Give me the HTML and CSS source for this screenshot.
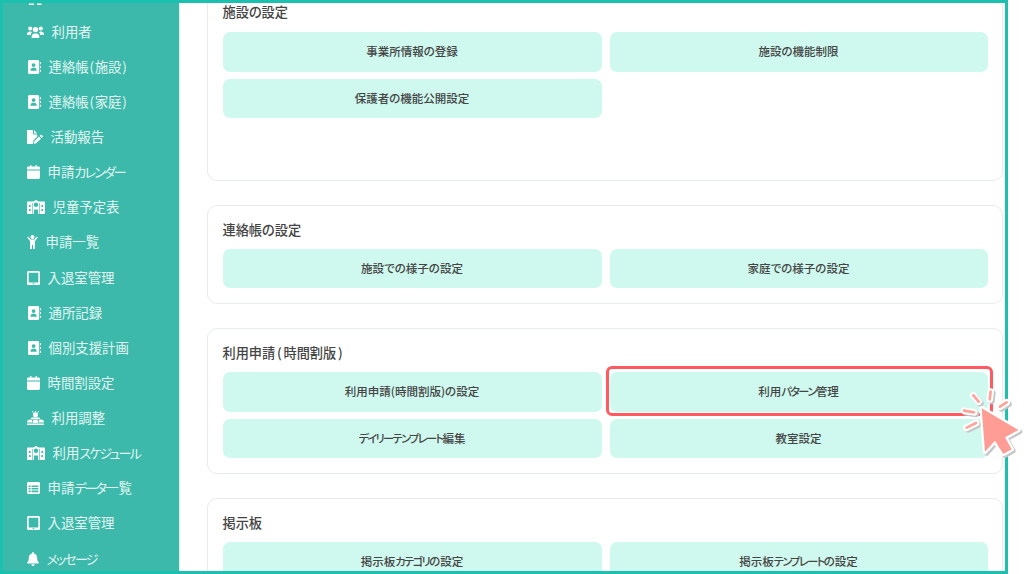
FILE: index.html
```html
<!DOCTYPE html>
<html lang="ja">
<head>
<meta charset="utf-8">
<title>設定</title>
<link rel="stylesheet" href="styles.css">
</head>
<body>
<div class="page">
  <div class="frame">
    <nav class="sidebar">
      <ul class="menu">
        <li class="item"><svg class="icon" width="17" height="16" viewBox="0 0 17 16"><rect x="2" y="14.5" width="5" height="1.5"/><rect x="10" y="14.5" width="4.5" height="1.5"/></svg></li>
        <li class="item"><svg class="icon" width="17" height="14" viewBox="0 0 17 14"><use href="#i-users"/></svg><span>利用者</span></li>
        <li class="item indent"><svg class="icon" width="13" height="14" viewBox="0 0 13 14"><use href="#i-book"/></svg><span>連絡帳<b class="paren">(</b>施設<b class="paren">)</b></span></li>
        <li class="item indent"><svg class="icon" width="13" height="14" viewBox="0 0 13 14"><use href="#i-book"/></svg><span>連絡帳<b class="paren">(</b>家庭<b class="paren">)</b></span></li>
        <li class="item"><svg class="icon" width="16" height="14" viewBox="0 0 16 14"><use href="#i-file"/></svg><span>活動報告</span></li>
        <li class="item"><svg class="icon" width="13" height="14" viewBox="0 0 13 14"><use href="#i-cal"/></svg><span>申請<i class="kana">カレンダー</i></span></li>
        <li class="item"><svg class="icon" width="18" height="14" viewBox="0 0 18 14"><use href="#i-school"/></svg><span>児童予定表</span></li>
        <li class="item"><svg class="icon" width="11" height="14" viewBox="0 0 11 14"><use href="#i-child"/></svg><span>申請一覧</span></li>
        <li class="item"><svg class="icon" width="13" height="14" viewBox="0 0 13 14"><use href="#i-tablet"/></svg><span>入退室管理</span></li>
        <li class="item indent"><svg class="icon" width="13" height="14" viewBox="0 0 13 14"><use href="#i-book"/></svg><span>通所記録</span></li>
        <li class="item indent"><svg class="icon" width="13" height="14" viewBox="0 0 13 14"><use href="#i-book"/></svg><span>個別支援計画</span></li>
        <li class="item"><svg class="icon" width="13" height="14" viewBox="0 0 13 14"><use href="#i-cal"/></svg><span>時間割設定</span></li>
        <li class="item"><svg class="icon" width="17" height="14" viewBox="0 0 17 14"><use href="#i-adjust"/></svg><span>利用調整</span></li>
        <li class="item"><svg class="icon" width="18" height="14" viewBox="0 0 18 14"><use href="#i-school"/></svg><span>利用<i class="kana">スケジュール</i></span></li>
        <li class="item"><svg class="icon" width="13" height="12" viewBox="0 0 13 12"><use href="#i-table"/></svg><span>申請<i class="kana">データ</i>一覧</span></li>
        <li class="item"><svg class="icon" width="13" height="14" viewBox="0 0 13 14"><use href="#i-tablet"/></svg><span>入退室管理</span></li>
        <li class="item"><svg class="icon" width="12" height="14" viewBox="0 0 12 14"><use href="#i-bell"/></svg><span><i class="kana">メッセージ</i></span></li>
      </ul>
    </nav>
    <main class="main">
      <div class="stack">
        <section class="card card-tall">
          <h2 class="title">施設の設定</h2>
          <div class="grid">
            <a class="btn">事業所情報の登録</a>
            <a class="btn">施設の機能制限</a>
            <a class="btn">保護者の機能公開設定</a>
          </div>
        </section>
        <section class="card">
          <h2 class="title">連絡帳の設定</h2>
          <div class="grid">
            <a class="btn">施設での様子の設定</a>
            <a class="btn">家庭での様子の設定</a>
          </div>
        </section>
        <section class="card">
          <h2 class="title">利用申請<b class="paren-wide">(</b>時間割版<b class="paren-wide">)</b></h2>
          <div class="grid">
            <a class="btn">利用申請(時間割版)の設定</a>
            <a class="btn marked">利用<i class="kana">パターン</i>管理</a>
            <a class="btn"><i class="kana">デイリーテンプレート</i>編集</a>
            <a class="btn">教室設定</a>
          </div>
        </section>
        <section class="card">
          <h2 class="title">掲示板</h2>
          <div class="grid">
            <a class="btn">掲示板<i class="kana">カテゴリ</i>の設定</a>
            <a class="btn">掲示板<i class="kana">テンプレート</i>の設定</a>
          </div>
        </section>
      </div>
    </main>
  </div>

  <svg class="pointer" width="124" height="124" viewBox="0 0 372 372">
    <g class="pointer-shadow" transform="translate(5 5)">
      <path d="M245 175 355 240 315 262 335 298 310 312 285 272 255 305Z"/>
      <path class="spark-s" d="M220 136 236 155M272 125 269 148M320 157 300 170M192 182 222 187M200 233 228 219"/>
    </g>
    <path class="arrow-edge" d="M245 175 355 240 315 262 335 298 310 312 285 272 255 305Z"/>
    <path class="spark-edge" d="M220 136 236 155M272 125 269 148M320 157 300 170M192 182 222 187M200 233 228 219"/>
    <path class="spark" d="M220 136 236 155M272 125 269 148M320 157 300 170M192 182 222 187M200 233 228 219"/>
    <path class="arrow" d="M245 175 355 240 315 262 335 298 310 312 285 272 255 305Z"/>
  </svg>
</div>

<svg class="defs" width="0" height="0">
  <defs>
    <symbol id="i-users" viewBox="0 0 17 14">
      <circle cx="3.2" cy="3.6" r="2"/><circle cx="13.8" cy="3.6" r="2"/><circle cx="8.5" cy="4.6" r="2.7"/>
      <path d="M0 9.4C0 7.4 1.4 6.4 3 6.4 4 6.4 4.7 6.8 5 7.2 4.2 8 3.8 8.8 3.7 10H.6C.2 10 0 9.8 0 9.4ZM17 9.4C17 7.4 15.6 6.4 14 6.4 13 6.4 12.3 6.8 12 7.2 12.8 8 13.2 8.8 13.3 10H16.4C16.8 10 17 9.8 17 9.4ZM4.6 12C4.6 9.8 6 8.4 7.2 8.4H9.8C11 8.4 12.4 9.8 12.4 12 12.4 12.7 12 13 11.5 13H5.5C5 13 4.6 12.7 4.6 12Z"/>
    </symbol>
    <symbol id="i-book" viewBox="0 0 13 14">
      <path fill-rule="evenodd" d="M1.5 0H9.7C10.5 0 11.2.7 11.2 1.5V12.5C11.2 13.3 10.5 14 9.7 14H1.5C.7 14 0 13.3 0 12.5V1.5C0 .7.7 0 1.5 0ZM5.6 3.2A1.9 1.9 0 1 0 5.6 7 1.9 1.9 0 0 0 5.6 3.2ZM2.5 10.8H8.7C8.7 8.9 7.6 7.8 6.6 7.8H4.6C3.6 7.8 2.5 8.9 2.5 10.8Z"/>
      <path d="M12 2.2H13V4.2H12ZM12 6H13V8H12ZM12 9.8H13V11.8H12Z"/>
    </symbol>
    <symbol id="i-file" viewBox="0 0 16 14">
      <path d="M0 1C0 .4.4 0 1 0H6V3.6C6 4.2 6.4 4.6 7 4.6H10.2V6.6L6.6 10.4 6 13.6 6.2 14H1C.4 14 0 13.6 0 13ZM7 0 10.2 3.4H7ZM11.8 6.6 14 8.8 8.8 13.4 6.9 13.8 7.3 11.6ZM12.6 5.8 13.6 5C14 4.7 14.4 4.7 14.8 5L15.6 5.8C16 6.2 16 6.7 15.6 7L14.8 8Z"/>
    </symbol>
    <symbol id="i-cal" viewBox="0 0 13 14">
      <path d="M3 0H4.4V1.6H8.6V0H10V1.6H11.6C12.4 1.6 13 2.2 13 3V4.6H0V3C0 2.2.6 1.6 1.4 1.6H3ZM0 5.4H13V12.6C13 13.4 12.4 14 11.6 14H1.4C.6 14 0 13.4 0 12.6Z"/>
    </symbol>
    <symbol id="i-school" viewBox="0 0 18 14">
      <path fill-rule="evenodd" d="M6.2 1.6 9 0 11.8 1.6H17C17.6 1.6 18 2 18 2.6V13C18 13.6 17.6 14 17 14H11V9.6H7V14H1C.4 14 0 13.6 0 13V2.6C0 2 .4 1.6 1 1.6ZM9 2.6A2.2 2.2 0 1 0 9 7 2.2 2.2 0 0 0 9 2.6ZM2 5V7H3.6V5ZM14.4 5V7H16V5ZM2 9V11H3.6V9ZM14.4 9V11H16V9ZM5 3V14H5.6V3ZM12.4 3V14H13V3Z"/>
    </symbol>
    <symbol id="i-child" viewBox="0 0 11 14">
      <circle cx="5.5" cy="2" r="2"/>
      <path d="M1.4 1.6 3.6 4.4H7.4L9.6 1.6 10.8 2.6 7.9 6.2V14H6V10H5V14H3.1V6.2L.2 2.6Z"/>
    </symbol>
    <symbol id="i-tablet" viewBox="0 0 13 14">
      <path fill-rule="evenodd" d="M1.6 0H11.4C12.3 0 13 .7 13 1.6V12.4C13 13.3 12.3 14 11.4 14H1.6C.7 14 0 13.3 0 12.4V1.6C0 .7.7 0 1.6 0ZM1.7 1.7V11.6H11.3V1.7ZM5.6 12.2V13.2H7.4V12.2Z"/>
    </symbol>
    <symbol id="i-adjust" viewBox="0 0 17 14">
      <path d="M8.5 1.2A2.6 2.6 0 1 1 8.5 6.4 2.6 2.6 0 0 1 8.5 1.2ZM5.4 0 6.8 1.2 6 1.8 4.8.6ZM11.6 0 12.2.6 11 1.8 10.2 1.2ZM8 0H9V1H8Z"/>
      <path d="M4.4 6.4H12.6L13.4 8.2H3.6ZM1 9C2.2 8.2 3.6 8.2 4.8 9 5.6 9.8 5.6 10.6 5.2 11.6H.4C-.1 10.6.2 9.8 1 9ZM12.2 9C13.4 8.2 14.8 8.2 16 9 16.8 9.8 17.1 10.6 16.6 11.6H11.8C11.4 10.6 11.4 9.8 12.2 9ZM6.4 8.8H10.6L11.2 12H5.8ZM0 12.4H17V14H0Z"/>
    </symbol>
    <symbol id="i-table" viewBox="0 0 13 12">
      <path fill-rule="evenodd" d="M1.4 0H11.6C12.4 0 13 .6 13 1.4V10.6C13 11.4 12.4 12 11.6 12H1.4C.6 12 0 11.4 0 10.6V1.4C0 .6.6 0 1.4 0ZM1.6 3.4V5H3.6V3.4ZM4.6 3.4V5H11.4V3.4ZM1.6 6V7.4H3.6V6ZM4.6 6V7.4H11.4V6ZM1.6 8.4V10.2H3.6V8.4ZM4.6 8.4V10.2H11.4V8.4Z"/>
    </symbol>
    <symbol id="i-bell" viewBox="0 0 12 14">
      <path d="M6 0C6.5 0 6.9.4 6.9 1V1.6C9 2 10.2 3.8 10.2 6 10.2 8.6 11 9.6 11.8 10.4 12.1 10.8 11.9 11.4 11.3 11.4H.7C.1 11.4-.1 10.8.2 10.4 1 9.6 1.8 8.6 1.8 6 1.8 3.8 3 2 5.1 1.6V1C5.1.4 5.5 0 6 0ZM4.4 12.2H7.6C7.6 13.2 6.9 14 6 14S4.4 13.2 4.4 12.2Z"/>
    </symbol>
  </defs>
</svg>
</body>
</html>
```

FILE: styles.css
```css
* { box-sizing: border-box; }
html, body { margin: 0; padding: 0; background: #fff; }
body {
  font-family: "Noto Sans CJK JP", "Noto Sans", sans-serif;
  font-feature-settings: "palt";
  overflow: hidden;
}
.page {
  position: relative;
  width: 1024px;
  height: 574px;
  overflow: hidden;
  background: #fff;
}
.frame {
  display: flex;
  width: 1008px;
  height: 574px;
  border: 3.5px solid #1cc0af;
  border-right-width: 3px;
  overflow: hidden;
  background: #fff;
}
.sidebar {
  flex: 0 0 176.5px;
  height: 100%;
  background: #3cb9ab;
  border-right: 1px solid #d8f1ed;
  overflow: hidden;
}
.menu {
  list-style: none;
  margin: -24px 0 0;
  padding: 0 0 0 23.5px;
}
.item {
  display: flex;
  align-items: center;
  gap: 8px;
  height: 35.13px;
  color: #e4f6f3;
  font-size: 13.4px;
  white-space: nowrap;
}
.item span { padding-bottom: 2px; }
.item.indent { padding-left: 1px; }
.icon { flex: none; fill: #fff; }
.kana {
  font-style: normal;
  font-size: .97em;
  letter-spacing: -.14em;
}
.paren {
  font-weight: 400;
  margin: 0 .75px;
}
.paren-wide {
  font-weight: 500;
  margin: 0 1.75px;
}
.main {
  flex: 1;
  height: 100%;
  overflow: hidden;
  padding-left: 27px;
  padding-right: 2px;
}
.stack {
  display: flex;
  flex-direction: column;
  gap: 24px;
  margin-top: -15px;
}
.card {
  border: 1px solid #e8ebee;
  border-radius: 10px;
  background: #fff;
  padding: 15px 15px 15px;
}
.card-tall { height: 192.5px; }
.card-tall .title { margin-top: -1px; margin-bottom: 11px; }
.title {
  margin: 0 0 10px;
  font-size: 13.2px;
  line-height: 18px;
  font-weight: 500;
  color: #444;
}
.grid {
  display: grid;
  grid-template-columns: 379px 378px;
  column-gap: 8px;
  row-gap: 7px;
}
.btn {
  position: relative;
  display: flex;
  align-items: center;
  justify-content: center;
  height: 39.5px;
  padding-bottom: 1px;
  border-radius: 7px;
  background: #cff9ef;
  color: #444;
  font-size: 11.5px;
  font-weight: 500;
}
.marked::after {
  content: "";
  position: absolute;
  top: -6px;
  right: -5px;
  bottom: -4.5px;
  left: -4px;
  border: 3px solid #ff5a60;
  border-radius: 6px;
  box-shadow: inset 0 0 0 1px #fff;
}
.pointer {
  position: absolute;
  left: 900px;
  top: 350px;
}
.pointer path { fill: none; stroke-linecap: round; stroke-linejoin: round; }
.pointer .arrow { fill: #ff9d94; }
.pointer .arrow-edge { fill: #fff; stroke: #fff; stroke-width: 14; }
.pointer .pointer-shadow path { fill: #c6c6c6; stroke: #c6c6c6; stroke-width: 14; }
.pointer .pointer-shadow .spark-s { fill: none; stroke-width: 20; }
.pointer .spark-edge { stroke: #fff; stroke-width: 20; }
.pointer .spark { stroke: #ffa39b; stroke-width: 8; }
.defs { position: absolute; }
```
